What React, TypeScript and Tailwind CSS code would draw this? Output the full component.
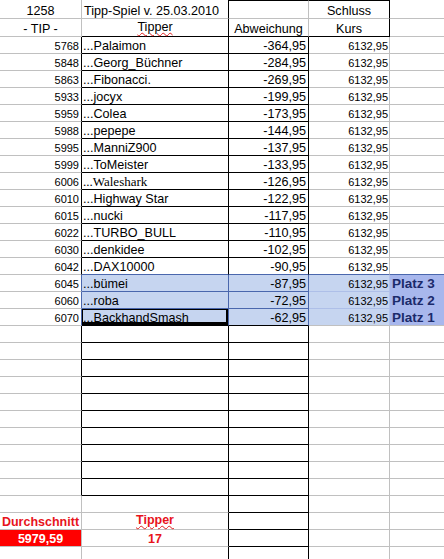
import React from "react";

type Row = { tip: string; name: string; diff: string; serif?: boolean; platz?: string };

const ROWS: Row[] = [
  { tip: "5768", name: "...Palaimon", diff: "-364,95" },
  { tip: "5848", name: "...Georg_Büchner", diff: "-284,95" },
  { tip: "5863", name: "...Fibonacci.", diff: "-269,95" },
  { tip: "5933", name: "...jocyx", diff: "-199,95" },
  { tip: "5959", name: "...Colea", diff: "-173,95" },
  { tip: "5988", name: "...pepepe", diff: "-144,95" },
  { tip: "5995", name: "...ManniZ900", diff: "-137,95" },
  { tip: "5999", name: "...ToMeister", diff: "-133,95" },
  { tip: "6006", name: "...Waleshark", diff: "-126,95", serif: true },
  { tip: "6010", name: "...Highway Star", diff: "-122,95" },
  { tip: "6015", name: "...nucki", diff: "-117,95" },
  { tip: "6022", name: "...TURBO_BULL", diff: "-110,95" },
  { tip: "6030", name: "...denkidee", diff: "-102,95" },
  { tip: "6042", name: "...DAX10000", diff: "-90,95" },
  { tip: "6045", name: "...bümei", diff: "-87,95", platz: "Platz 3" },
  { tip: "6060", name: "...roba", diff: "-72,95", platz: "Platz 2" },
  { tip: "6070", name: "...BackhandSmash", diff: "-62,95", platz: "Platz 1" },
];

const KURS = "6132,95";

// base cell: bottom-aligned text like Excel, each cell owns its right and bottom line
const base = "shrink-0 flex items-end border-r border-b whitespace-nowrap leading-[14px]";
const cell = `${base} overflow-hidden`;
const A = `${cell} w-[82px]`;
const B = `${cell} w-[147px]`;
const C = `${cell} w-[80px]`;
const D = `${cell} w-[81px]`;
const E = `${cell} w-[81px]`;
// B cell where the spell-check squiggle must not be clipped
const Bopen = `${base} w-[147px]`;

function Squiggle({ children }: { children: React.ReactNode }) {
  return (
    <span className="underline decoration-wavy decoration-[#e02020] decoration-[1px] underline-offset-[1px]">
      {children}
    </span>
  );
}

function DataRow({ row, i }: { row: Row; i: number }) {
  const hl = !!row.platz;
  const last = i === ROWS.length - 1;
  const blueBottom = i >= 13 && i <= 15;

  return (
    <div className="flex h-[17px]">
      <div className={`${A} justify-end pr-[2px] text-[11px] border-b-[#c0c0c0] ${hl ? "border-r-[#4a67ad]" : "border-r-black"}`}>
        {row.tip}
      </div>
      <div
        className={`${B} relative pl-[1px] ${hl ? "bg-[#c6d5f0] border-r-[#4a67ad]" : "border-r-black"} ${
          blueBottom ? "border-b-[#4a67ad]" : "border-b-black"
        } ${row.serif ? "font-['Liberation_Serif',serif] text-[13px]" : ""}`}
      >
        {row.name}
        {last && (
          <div className="pointer-events-none absolute -top-[2px] -left-[2px] -right-[1px] bottom-0 z-10 border-[3px] border-black" />
        )}
      </div>
      <div
        className={`${C} justify-end pr-[2px] ${hl ? "bg-[#c6d5f0] border-r-[#4a67ad]" : "border-r-black"} ${
          blueBottom ? "border-b-[#4a67ad]" : "border-b-black"
        }`}
      >
        {row.diff}
      </div>
      <div
        className={`${D} justify-end pr-[1px] text-[11px] ${hl ? "bg-[#c6d5f0] border-r-[#b3c3ec]" : "border-r-[#c0c0c0]"} ${
          i === 13 ? "border-b-[#4a67ad]" : hl && !last ? "border-b-[#aebfe8]" : "border-b-[#c0c0c0]"
        }`}
      >
        {KURS}
      </div>
      <div
        className={`${E} pl-[2px] border-r-[#c0c0c0] ${hl ? "bg-[#a8b7ed]" : ""} ${
          i === 13 ? "border-b-[#4a67ad]" : hl && !last ? "border-b-[#a8b7ed]" : "border-b-[#c0c0c0]"
        }`}
      >
        {row.platz && <span className="font-bold text-[13.5px] text-[#1b2a6b]">{row.platz}</span>}
      </div>
    </div>
  );
}

function EmptyRow({ boxed }: { boxed: boolean }) {
  return (
    <div className="flex h-[17px]">
      <div className={`${A} border-b-[#c0c0c0] ${boxed ? "border-r-black" : "border-r-[#c0c0c0]"}`} />
      <div className={`${B} border-r-black ${boxed ? "border-b-black" : "border-b-[#c0c0c0]"}`} />
      <div className={`${C} border-r-black border-b-black`} />
      <div className={`${D} border-r-[#c0c0c0] border-b-[#c0c0c0]`} />
      <div className={`${E} border-r-[#c0c0c0] border-b-[#c0c0c0]`} />
    </div>
  );
}

export default function App() {
  return (
    <div className="w-[444px] h-[559px] overflow-hidden bg-white text-black text-[12.6px] font-['Liberation_Sans',Arial,sans-serif]">
      {/* header row 1 */}
      <div className="flex h-[19px]">
        <div className={`${A} justify-center border-r-[#c0c0c0] border-b-[#c0c0c0]`}>1258</div>
        <div className={`${B} pl-[2px] border-r-black border-b-[#c0c0c0]`}>Tipp-Spiel v. 25.03.2010</div>
        <div className={`${C} border-t border-t-black border-r-[#c0c0c0] border-b-[#c0c0c0]`} />
        <div className={`${D} justify-center border-t border-t-black border-r-black border-b-[#c0c0c0]`}>Schluss</div>
        <div className={`${E} border-r-[#c0c0c0] border-b-[#c0c0c0]`} />
      </div>
      {/* header row 2 */}
      <div className="flex h-[18px]">
        <div className={`${A} justify-center border-r-[#c0c0c0] border-b-[#c0c0c0]`}>- TIP -</div>
        <div className={`${Bopen} justify-center pb-[2px] border-r-black border-b-black`}>
          <Squiggle>Tipper</Squiggle>
        </div>
        <div className={`${C} justify-center border-r-[#c0c0c0] border-b-black`}>Abweichung</div>
        <div className={`${D} justify-center border-r-black border-b-black`}>Kurs</div>
        <div className={`${E} border-r-[#c0c0c0] border-b-[#c0c0c0]`} />
      </div>

      {ROWS.map((row, i) => (
        <DataRow key={row.tip} row={row} i={i} />
      ))}

      {Array.from({ length: 10 }).map((_, i) => (
        <EmptyRow key={`b${i}`} boxed />
      ))}
      <EmptyRow boxed={false} />

      {/* summary */}
      <div className="flex h-[17px]">
        <div className={`${A} justify-center font-bold text-[12.5px] text-[#e8141c] border-r-[#c0c0c0] border-b-[#c0c0c0]`}>
          Durchschnitt
        </div>
        <div className={`${Bopen} justify-center pb-[2px] font-bold text-[12.5px] text-[#e8141c] border-r-black border-b-[#c0c0c0]`}>
          <Squiggle>Tipper</Squiggle>
        </div>
        <div className={`${C} border-r-black border-b-black`} />
        <div className={`${D} border-r-[#c0c0c0] border-b-[#c0c0c0]`} />
        <div className={`${E} border-r-[#c0c0c0] border-b-[#c0c0c0]`} />
      </div>
      <div className="flex h-[17px]">
        <div className={`${A} justify-center bg-[#ff0000] font-bold text-[12.5px] text-white border-r-[#c0c0c0] border-b-[#c0c0c0]`}>
          5979,59
        </div>
        <div className={`${B} justify-center font-bold text-[12.5px] text-[#e8141c] border-r-black border-b-[#c0c0c0]`}>17</div>
        <div className={`${C} border-r-black border-b-black`} />
        <div className={`${D} border-r-[#c0c0c0] border-b-[#c0c0c0]`} />
        <div className={`${E} border-r-[#c0c0c0] border-b-[#c0c0c0]`} />
      </div>
      <EmptyRow boxed={false} />
    </div>
  );
}
